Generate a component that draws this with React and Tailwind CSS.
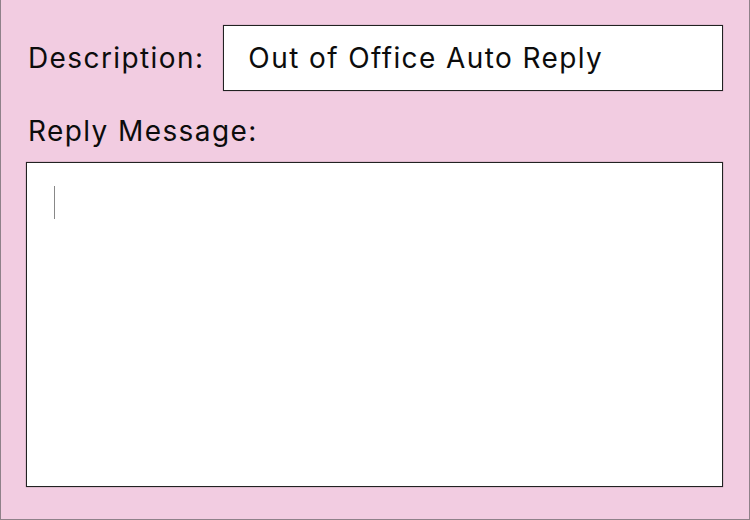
import React from "react";

export default function App() {
  return (
    <div
      className="w-[750px] h-[520px] bg-[#f2cce1] border-x border-b border-[#8f8189] flex flex-col pl-[25px] pr-[26px] pt-[25px] pb-[32px] text-[#0c0c0c] overflow-hidden"
      style={{ fontFamily: "Inter, 'Liberation Sans', sans-serif" }}
    >
      {/* Description row */}
      <div className="flex items-center">
        <span className="pl-[2px] text-[28px] tracking-[0.05em] leading-none">Description:</span>
        <div className="ml-[19px] flex-1 h-[66px] bg-white border border-[#222] shadow-[0_0_1px_rgba(0,0,0,0.4)] flex items-center pl-[24px]">
          <span className="text-[28px] tracking-[0.05em] leading-none">Out of Office Auto Reply</span>
        </div>
      </div>

      {/* Reply message */}
      <div className="mt-[26px] pl-[2px] text-[28px] tracking-[0.05em] leading-none">Reply Message:</div>

      <div className="mt-[17px] flex-1 bg-white border border-[#222] shadow-[0_0_1px_rgba(0,0,0,0.5)] pl-[27px] pt-[23px]">
        <span className="block w-px h-[33px] bg-[#888]" />
      </div>
    </div>
  );
}
